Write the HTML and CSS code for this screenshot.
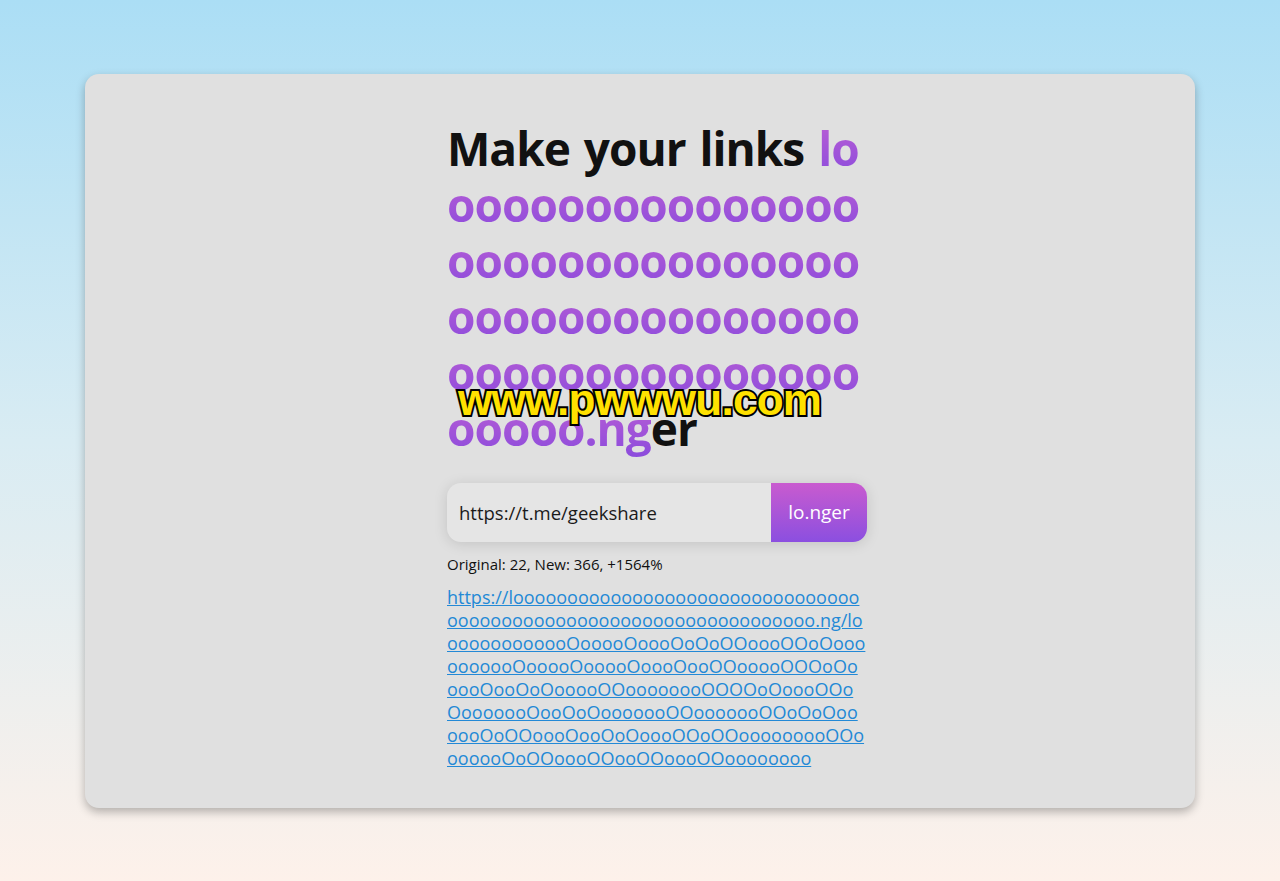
FILE: index.html
```html
<!DOCTYPE html>
<html lang="en">
<head>
  <meta charset="UTF-8">
  <title>lo.nger</title>
  <link rel="stylesheet" href="styles.css">
</head>
<body>

  <main class="card">
    <div class="inner">

      <h1 class="title">Make your links <span class="long">loooooooooooooooooooooooooooooooooooooooooooooooooooooooooooooooooo.ng</span>er</h1>

      <!-- formulário -->
      <form class="shorten" onsubmit="return false">
        <input class="url-input" value="https://t.me/geekshare">
        <button class="go">lo.nger</button>
      </form>

      <p class="stats">Original: 22, New: 366, +1564%</p>

      <a class="result" href="#">https://loooooooooooooooooooooooooooooooooooooooooooooooooooooooooooooooooo.ng/looooooooooooOooooOoooOoOoOOoooOOoOoooooooooOooooOooooOoooOooOOooooOOOoOooooOooOoOooooOOoooooooOOOOoOoooOOoOooooooOooOoOooooooOOooooooOOoOoOoooooOoOOoooOooOoOoooOOoOOooooooooOOooooooOoOOoooOOooOOoooOOoooooooo</a>

      <div class="watermark">www.pwwwu.com</div>
    </div>
  </main>

</body>
</html>
```

FILE: styles.css
```css
body {
  margin: 0;
  min-height: 100vh;
  display: flex;
  align-items: center;
  justify-content: center;
  background: linear-gradient(to bottom, #abdef5 0%, #d9ecf3 50%, #fdf1ea 100%);
  font-family: "Open Sans", "Noto Sans", sans-serif;
}

.card {
  width: 1110px;
  box-sizing: border-box;
  background-color: #e0e0e0;
  border-radius: 14px;
  box-shadow: 0 4px 10px rgba(0, 0, 0, 0.28);
  padding: 46px 0 38px 34px;
  display: flex;
  justify-content: center;
}

.inner {
  width: 420px;
  position: relative;
}

.title {
  margin: 0;
  font-size: 46px;
  line-height: 56px;
  font-weight: 700;
  color: #111;
  word-break: break-all;
  letter-spacing: -1px;
  word-spacing: 3px;
}

.long {
  background: linear-gradient(to bottom, #bd5fd3, #8a4bdd);
  -webkit-background-clip: text;
  background-clip: text;
  color: transparent;
}

.shorten {
  display: flex;
  margin: 27px 0 0;
  height: 59px;
  border-radius: 14px;
  box-shadow: 0 2px 14px rgba(0, 0, 0, 0.13);
  background-color: #e5e5e5;
  overflow: hidden;
}

.url-input {
  flex: 1;
  min-width: 0;
  border: none;
  background: transparent;
  padding: 0 12px;
  font-family: inherit;
  font-size: 18.5px;
  color: #1a1a1a;
  outline: none;
}

.go {
  width: 96px;
  border: none;
  background: linear-gradient(to bottom, #c95bcf, #8b4fe0);
  color: #fff;
  font-family: inherit;
  font-size: 19px;
  cursor: pointer;
}

.stats {
  margin: 12px 0 0;
  font-size: 15px;
  line-height: 20px;
  color: #111;
}

.result {
  display: block;
  margin-top: 12px;
  font-size: 18px;
  line-height: 23px;
  color: #2389d6;
  word-break: break-all;
}

.watermark {
  position: absolute;
  left: 11px;
  top: 258px;
  font-family: "Liberation Sans", Arial, sans-serif;
  font-weight: 700;
  font-size: 44px;
  line-height: 1;
  color: #ffe100;
  -webkit-text-stroke: 4px #000;
  paint-order: stroke fill;
  letter-spacing: -0.7px;
}
```
